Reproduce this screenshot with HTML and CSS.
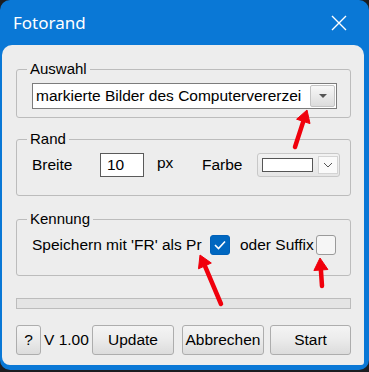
FILE: index.html
```html
<!DOCTYPE html>
<html lang="de">
<head>
    <meta charset="UTF-8">
    <title>Fotorand</title>
    <link rel="stylesheet" href="styles.css">
</head>
<body>

<div class="window">
    <div class="titlebar">
        <span class="title">Fotorand</span>
        <svg class="close" width="16" height="16" viewBox="0 0 16 16">
            <path d="M1 1 L15 15 M15 1 L1 15" stroke="#fff" stroke-width="1.4" fill="none"/>
        </svg>
    </div>

    <div class="client">
        <fieldset class="group group-auswahl">
            <legend>Auswahl</legend>
            <div class="combo">
                <span class="combo-text">markierte Bilder des Computervererzei</span>
                <span class="combo-btn"><span class="tri"></span></span>
            </div>
        </fieldset>

        <fieldset class="group group-rand">
            <legend>Rand</legend>
            <div class="row">
                <span class="lbl-breite">Breite</span>
                <span class="num-input">10</span>
                <span class="lbl-px">px</span>
                <span class="lbl-farbe">Farbe</span>
                <span class="color-combo">
                    <span class="swatch"></span>
                    <span class="color-btn">
                        <svg width="10" height="6" viewBox="0 0 10 6"><path d="M1 1 L5 5 L9 1" stroke="#555" stroke-width="1" fill="none"/></svg>
                    </span>
                </span>
            </div>
        </fieldset>

        <fieldset class="group group-kennung">
            <legend>Kennung</legend>
            <div class="row">
                <span class="lbl-prefix">Speichern mit 'FR' als Pr</span>
                <span class="check checked">
                    <svg width="14" height="12" viewBox="0 0 14 12"><path d="M2 6 L5.5 9.5 L12 2.5" stroke="#fff" stroke-width="1.6" fill="none"/></svg>
                </span>
                <span class="lbl-suffix">oder Suffix</span>
                <span class="check"></span>
            </div>
        </fieldset>

        <div class="progress"></div>

        <div class="buttons">
            <button class="btn btn-help">?</button>
            <span class="version">V 1.00</span>
            <button class="btn btn-update">Update</button>
            <button class="btn btn-cancel">Abbrechen</button>
            <button class="btn btn-start">Start</button>
        </div>
    </div>

    <svg class="arrows" width="369" height="372" viewBox="0 0 369 372">
        <g fill="#f0000c" stroke="#f0000c">
            <line x1="295" y1="147" x2="303.3" y2="121.4" stroke-width="4.5" stroke-linecap="round"/>
            <polygon points="307,110 310,123.6 296.6,119.2" stroke-width="1"/>
            <line x1="221" y1="304" x2="204.9" y2="265.9" stroke-width="4.5" stroke-linecap="round"/>
            <polygon points="200,255 211.3,263 198.5,268.8" stroke-width="1"/>
            <line x1="322" y1="286" x2="320.9" y2="270" stroke-width="4.5" stroke-linecap="round"/>
            <polygon points="320,258 327.9,269.5 313.9,270.5" stroke-width="1"/>
        </g>
    </svg>
</div>

</body>
</html>
```

FILE: styles.css
```css
body {
    margin: 0;
    background: #1c1e22;
    font-family: "Liberation Sans", Arial, sans-serif;
    color: #000;
}
.window {
    position: relative;
    width: 369px;
    height: 370px;
    box-sizing: border-box;
    background: #0a78d6;
    border-radius: 10px;
    padding: 0 5px 5px 2px;
    display: flex;
    flex-direction: column;
}
.titlebar {
    height: 45px;
    flex: none;
    display: flex;
    align-items: center;
    justify-content: space-between;
    padding: 0 17px 0 11px;
    color: #fff;
}
.title {
    font-family: "Noto Sans", sans-serif;
    font-size: 17px;
}
.client {
    flex: 1;
    min-width: 0;
    background: #ededed;
    border-radius: 10px 10px 3px 8px;
    padding: 15px 13px 0 14px;
}
.group {
    margin: 0;
    min-width: 0;
    border: 1px solid #bcbcbc;
    border-radius: 3px;
    padding: 5px 13px 8px 15px;
}
.group legend {
    padding: 0 3px;
    margin-left: -5px;
    font-size: 15px;
    line-height: 18px;
}
.group-rand {
    margin-top: 12px;
    padding-bottom: 18px;
}
.group-kennung {
    margin-top: 14px;
    padding-top: 7px;
    padding-bottom: 20px;
}
.combo {
    display: flex;
    height: 26px;
    box-sizing: border-box;
    border: 1px solid #7c7c7c;
    background: #fff;
}
.combo-text {
    flex: 1;
    min-width: 0;
    padding-left: 3px;
    font-size: 15.5px;
    line-height: 24px;
    white-space: nowrap;
    overflow: hidden;
}
.combo-btn {
    flex: none;
    width: 25px;
    margin: 1px;
    box-sizing: border-box;
    border: 1px solid #c4c4c4;
    border-radius: 2px;
    background: linear-gradient(#f8f8f8, #dcdcdc);
    display: flex;
    align-items: center;
    justify-content: center;
}
.tri {
    width: 0;
    height: 0;
    border-left: 4px solid transparent;
    border-right: 4px solid transparent;
    border-top: 4px solid #555;
}
.row {
    display: flex;
    align-items: center;
    font-size: 15.5px;
}
.row > * {
    flex: none;
}
.group-rand .row {
    height: 24px;
}
.lbl-breite {
    width: 68px;
}
.num-input {
    width: 44px;
    height: 24px;
    box-sizing: border-box;
    border: 1px solid #5a5a5a;
    background: #fff;
    padding-left: 6px;
    line-height: 22px;
}
.lbl-px {
    width: 58px;
    padding-left: 13px;
    box-sizing: border-box;
    margin-top: -4px;
}
.lbl-farbe {
    width: 55px;
}
.color-combo {
    width: 83px;
    height: 24px;
    box-sizing: border-box;
    border: 1px solid #c8c8c8;
    border-radius: 3px;
    background: linear-gradient(#f2f2f2, #e6e6e6);
    display: flex;
    align-items: center;
    padding-left: 4px;
}
.swatch {
    width: 51px;
    height: 14px;
    box-sizing: border-box;
    border: 1px solid #555;
    background: #fff;
}
.color-btn {
    width: 20px;
    height: 18px;
    margin-left: 5px;
    box-sizing: border-box;
    border: 1px solid #d4d4d4;
    background: #fafafa;
    display: flex;
    align-items: center;
    justify-content: center;
}
.group-kennung .row {
    height: 20px;
}
.lbl-prefix {
    width: 178px;
    white-space: nowrap;
}
.check {
    width: 20px;
    height: 20px;
    box-sizing: border-box;
    border: 1px solid #9a9a9a;
    border-radius: 3px;
    background: #f6f6f6;
    display: flex;
    align-items: center;
    justify-content: center;
}
.check.checked {
    border-color: #0060b8;
    background: #0067c0;
}
.lbl-suffix {
    width: 76px;
    margin-left: 10px;
    white-space: nowrap;
}
.progress {
    margin-top: 22px;
    height: 9px;
    border: 1px solid #bcbcbc;
    background: #e4e4e4;
}
.buttons {
    margin-top: 16px;
    display: flex;
    align-items: center;
    height: 30px;
}
.btn {
    height: 30px;
    box-sizing: border-box;
    border: 1px solid #adadad;
    border-radius: 3px;
    background: linear-gradient(#f4f4f4 0%, #ececec 45%, #dcdcdc 100%);
    font-family: "Liberation Sans", Arial, sans-serif;
    font-size: 15.5px;
    color: #000;
    padding: 0;
}
.btn-help {
    width: 25px;
}
.version {
    width: 48px;
    margin-left: 3px;
    font-size: 15.5px;
}
.btn-update {
    width: 82px;
}
.btn-cancel {
    width: 82px;
    margin-left: 8px;
}
.btn-start {
    width: 81px;
    margin-left: 6px;
}
.arrows {
    position: absolute;
    top: 0;
    left: 0;
    pointer-events: none;
}
```
